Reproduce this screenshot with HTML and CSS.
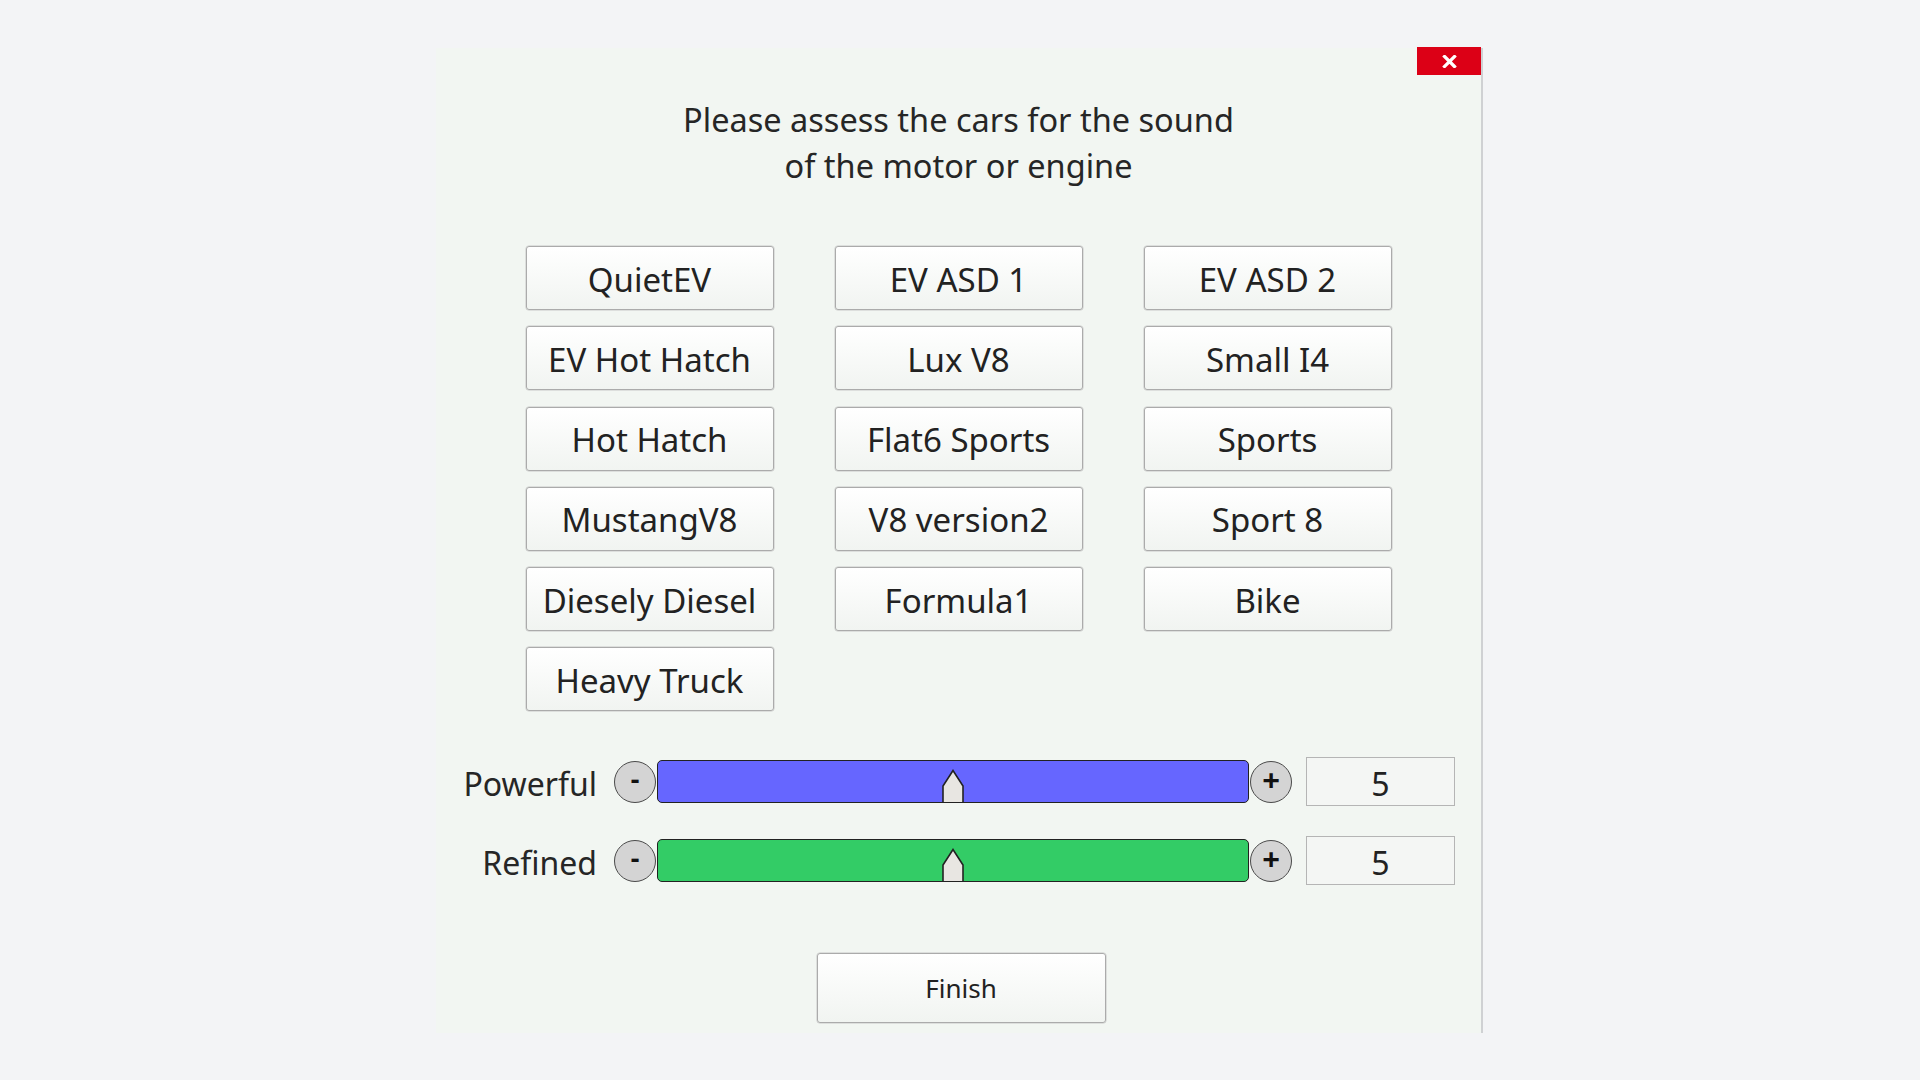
FILE: index.html
```html
<!DOCTYPE html>
<html>
<head>
<meta charset="utf-8">
<link rel="stylesheet" href="styles.css">
</head>
<body>
<div class="window">
  <button class="close" aria-label="Close">
    <svg width="15" height="13" viewBox="0 0 15 13"><path d="M2.5 1.5 L12.5 11.5 M12.5 1.5 L2.5 11.5" stroke="#fff" stroke-width="3.2" stroke-linecap="square"/></svg>
  </button>
  <h1 class="title">Please assess the cars for the sound<br>of the motor or engine</h1>
  <div class="cars">
    <button class="car">QuietEV</button>
    <button class="car">EV ASD 1</button>
    <button class="car">EV ASD 2</button>
    <button class="car">EV Hot Hatch</button>
    <button class="car">Lux V8</button>
    <button class="car">Small I4</button>
    <button class="car">Hot Hatch</button>
    <button class="car">Flat6 Sports</button>
    <button class="car">Sports</button>
    <button class="car">MustangV8</button>
    <button class="car">V8 version2</button>
    <button class="car">Sport 8</button>
    <button class="car">Diesely Diesel</button>
    <button class="car">Formula1</button>
    <button class="car">Bike</button>
    <button class="car">Heavy Truck</button>
  </div>
  <div class="sliders">
    <div class="slider-row">
      <span class="label">Powerful</span>
      <span class="step step-minus">-</span>
      <div class="bar bar-blue">
        <svg class="thumb" style="left:50%" width="23" height="34" viewBox="0 0 23 34"><path d="M1.5 34 V17 L11.5 1.5 L21.5 17 V34" fill="#e8e6e2" stroke="#222" stroke-width="1.6"/></svg>
      </div>
      <span class="step step-plus">+</span>
      <div class="value">5</div>
    </div>
    <div class="slider-row">
      <span class="label">Refined</span>
      <span class="step step-minus">-</span>
      <div class="bar bar-green">
        <svg class="thumb" style="left:50%" width="23" height="34" viewBox="0 0 23 34"><path d="M1.5 34 V17 L11.5 1.5 L21.5 17 V34" fill="#e8e6e2" stroke="#222" stroke-width="1.6"/></svg>
      </div>
      <span class="step step-plus">+</span>
      <div class="value">5</div>
    </div>
  </div>
  <div class="footer">
    <button class="finish">Finish</button>
  </div>
</div>
</body>
</html>
```

FILE: styles.css
```css
html, body {
  margin: 0;
  padding: 0;
}
body {
  background: #f3f4f6;
  font-family: "Noto Sans", "Open Sans", sans-serif;
  color: #222;
  width: 1920px;
  height: 1080px;
  overflow: hidden;
}
.window {
  position: relative;
  margin: 48px 0 0 436px;
  width: 1045px;
  height: 985px;
  background: #f2f6f2;
  border-right: 2px solid #cfd1d3;
  box-sizing: content-box;
}
.close {
  position: absolute;
  top: -1px;
  right: 0;
  width: 64px;
  height: 28px;
  border: none;
  padding: 0;
  background: #dc0016;
  display: flex;
  align-items: center;
  justify-content: center;
}
.title {
  margin: 0;
  padding-top: 49px;
  font-weight: normal;
  font-size: 32.5px;
  line-height: 46px;
  text-align: center;
  color: #262626;
}
.cars {
  display: grid;
  grid-template-columns: repeat(3, 248px);
  grid-auto-rows: 64px;
  column-gap: 61px;
  row-gap: 16.3px;
  justify-content: center;
  margin-top: 57px;
}
.car, .finish {
  font-family: inherit;
  color: #222;
  border: 1px solid #ababab;
  border-radius: 3px;
  background: linear-gradient(#ffffff, #f1f4f1);
  padding: 0;
  box-shadow: 0 0 0 0.5px #c8c8c8;
}
.car {
  font-size: 33px;
  padding-top: 2px;
}
.sliders {
  margin-top: 46px;
  display: flex;
  flex-direction: column;
  gap: 30px;
}
.slider-row {
  display: flex;
  align-items: center;
  height: 49px;
}
.label {
  width: 161px;
  text-align: right;
  font-size: 32px;
  margin-right: 17px;
  color: #262626;
  padding-top: 3px;
}
.step {
  width: 40px;
  height: 38px;
  border: 1.5px solid #4a4a4a;
  border-radius: 50%;
  background: #d4d4d4;
  display: flex;
  align-items: center;
  justify-content: center;
  font-size: 27px;
  font-weight: bold;
  color: #111;
  line-height: 1;
  padding-bottom: 2px;
  box-sizing: content-box;
}
.step-minus {
  padding-bottom: 6px;
  height: 34px;
}
.step-plus {
  font-size: 31px;
  padding-bottom: 4px;
  height: 36px;
}
.bar {
  position: relative;
  width: 590px;
  height: 41px;
  border: 1.5px solid #222;
  border-radius: 5px;
  margin: 0 1px;
  overflow: hidden;
}
.bar-blue { background: #6666ff; }
.bar-green { background: #33cc66; }
.thumb {
  position: absolute;
  bottom: -1px;
  transform: translateX(-50%);
}
.value {
  margin-left: 14px;
  width: 147px;
  border: 1px solid #b5b5b5;
  background: #f4f6f4;
  display: flex;
  align-items: center;
  justify-content: center;
  font-size: 32px;
  padding-top: 3px;
  box-sizing: content-box;
  height: 44px;
}
.footer {
  display: flex;
  justify-content: center;
  margin-top: 68px;
  padding-left: 5px;
}
.finish {
  width: 289px;
  height: 70px;
  font-size: 26px;
}
```
